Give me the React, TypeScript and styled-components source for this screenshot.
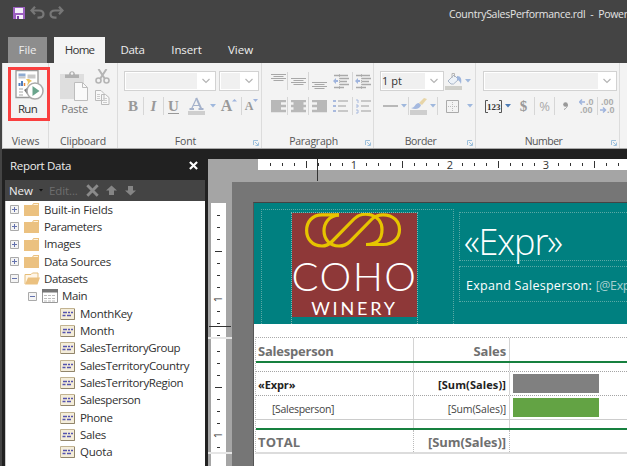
import React from 'react';
import styled, { createGlobalStyle } from 'styled-components';

const Global = createGlobalStyle`
  * { box-sizing: border-box; }
  html, body { margin: 0; width: 627px; height: 466px; overflow: hidden; background: #444; }
  body { font-family: "Open Sans", "Noto Sans", sans-serif; font-size: 12px; color: #333; }
  svg { display: block; flex: none; }
`;

const Text = styled.span<{ $size?: number; $ls?: number; $color?: string; $weight?: number; $font?: string }>`
  font-size: ${p => p.$size ?? 11.5}px;
  letter-spacing: ${p => p.$ls ?? -0.25}px;
  color: ${p => p.$color ?? 'inherit'};
  font-weight: ${p => p.$weight ?? 400};
  font-family: ${p => p.$font ?? 'inherit'};
  white-space: pre;
`;

const Window = styled.div`
  width: 627px;
  height: 466px;
  display: flex;
  flex-direction: column;
  background: #444;
  overflow: hidden;
`;

/* Title bar and tabs */
const TitleBar = styled.header`
  height: 37px;
  flex: none;
  display: flex;
  padding: 6px 0 0 13px;
  color: #e4e4e4;
`;
const QuickAccess = styled.div`
  width: 436px;
  flex: none;
  display: flex;
  gap: 4px;
`;
const Title = styled.div`
  line-height: 16px;
  white-space: pre;
`;
const Tabs = styled.nav`
  height: 26px;
  flex: none;
  display: flex;
  padding-left: 8px;
`;
const Tab = styled.div<{ $w: number; $kind?: 'file' | 'active' }>`
  width: ${p => p.$w}px;
  height: 26px;
  line-height: 26px;
  text-align: center;
  color: ${p => (p.$kind === 'active' ? '#333' : '#eee')};
  background: ${p => (p.$kind === 'active' ? '#f4f4f4' : p.$kind === 'file' ? '#8d8d8d' : 'transparent')};
  margin-right: ${p => (p.$kind === 'file' ? 7 : 0)}px;
`;

/* Ribbon */
const Ribbon = styled.div`
  height: 86px;
  flex: none;
  margin-left: 2px;
  display: flex;
  background: #f3f3f3;
  border-bottom: 1px solid #a9a9a9;
  border-left: 1px solid #ddd;
`;
const Group = styled.section<{ $w: number }>`
  width: ${p => p.$w}px;
  flex: none;
  position: relative;
  display: flex;
  flex-direction: column;
  border-right: 1px solid #dcdcdc;
`;
const ToolRow = styled.div<{ $pad: number; $mt: number }>`
  height: 20px;
  margin-top: ${p => p.$mt}px;
  padding-left: ${p => p.$pad}px;
  display: flex;
  align-items: center;
`;
const Slot = styled.div<{ $w: number }>`
  width: ${p => p.$w}px;
  height: 20px;
  flex: none;
  display: flex;
  align-items: center;
  justify-content: center;
`;
const Sep = styled.i`
  width: 1px;
  height: 18px;
  flex: none;
  background: #d6d6d6;
`;
const Combo = styled.div<{ $w: number; $mr?: number }>`
  width: ${p => p.$w}px;
  margin-right: ${p => p.$mr ?? 0}px;
  height: 20px;
  flex: none;
  display: flex;
  align-items: center;
  background: #fff;
  border: 1px solid #d2d2d2;
`;
const ComboValue = styled.div`
  flex: 1;
  height: 16px;
  margin-left: 1px;
  line-height: 15px;
  background: #f0f0f0;
`;
const GroupLabel = styled.div`
  margin-top: auto;
  height: 15px;
  line-height: 15px;
  display: flex;
  color: #555;
`;
const LabelText = styled.div`
  flex: 1;
  text-align: center;
`;
const Launcher = styled.div`
  width: 8px;
  padding-top: 7px;
`;
const Big = styled.div`
  display: flex;
  flex-direction: column;
  align-items: center;
  gap: 1px;
  line-height: 14px;
`;
const RunBody = styled(Big)`
  padding: 6px 0 0 3px;
  width: 46px;
  gap: 2px;
`;
const Highlight = styled.div`
  position: absolute;
  left: 5px;
  top: 4px;
  width: 42px;
  height: 54px;
  border: 3px solid #fa3f3f;
  z-index: 2;
`;
const ClipBody = styled.div`
  display: flex;
  padding: 6px 0 0 11px;
  gap: 6px;
`;
const ClipSmall = styled.div`
  display: flex;
  flex-direction: column;
  gap: 6px;
`;
const Glyph = styled.span<{ $size?: number; $italic?: boolean; $under?: boolean }>`
  font: ${p => (p.$italic ? 'italic ' : '')}bold ${p => p.$size ?? 15}px/16px "Liberation Serif", serif;
  color: #999;
  border-bottom: ${p => (p.$under ? '1px solid #999' : 'none')};
  height: ${p => (p.$under ? 16 : 17)}px;
`;

/* Work area */
const Work = styled.div`
  flex: 1;
  display: flex;
  min-height: 0;
  background: #212121;
  border-left: 2px solid #444;
`;
const Panel = styled.aside`
  width: 203px;
  flex: none;
  margin: 1px 0 0 3px;
  padding-right: 3px;
  display: flex;
  flex-direction: column;
`;
const PanelHead = styled.div`
  height: 30px;
  flex: none;
  padding: 1px 7px 0 5px;
  display: flex;
  align-items: center;
  justify-content: space-between;
  color: #eee;
`;
const PanelTools = styled.div`
  height: 21px;
  flex: none;
  padding-left: 4px;
  display: flex;
  align-items: center;
  background: #444;
  color: #eee;
`;
const Tool = styled.div<{ $w: number }>`
  width: ${p => p.$w}px;
  display: flex;
`;
const Tree = styled.div`
  flex: 1;
  background: #fff;
  line-height: 16px;
  color: #303030;
  border-left: 1px solid #ccc;
`;
const Node = styled.div<{ $pad: number }>`
  height: 17.33px;
  padding-left: ${p => p.$pad}px;
  display: flex;
  align-items: center;
`;
const Expander = styled.div`
  width: 14px;
`;
const NodeIcon = styled.div`
  width: 20px;
`;

/* Designer */
const Designer = styled.main`
  flex: 1;
  min-width: 0;
  margin-top: 10px;
  display: grid;
  grid-template-columns: 24px 1fr;
  grid-template-rows: 23px 1fr;
  background: #a5a5a5;
`;
const TopRuler = styled.div`
  grid-column: 2;
  position: relative;
  padding-left: 26px;
  overflow: hidden;
`;
const TopStrip = styled.div`
  width: 400px;
  height: 11px;
  background: #fff;
  padding-left: 6px;
  display: flex;
`;
const SideRuler = styled.div`
  grid-row: 2;
  grid-column: 1;
  position: relative;
  padding-top: 21px;
  overflow: hidden;
`;
const SideStrip = styled.div<{ $h: number }>`
  height: ${p => p.$h}px;
  width: 24px;
  border-bottom: 2px solid #e6e6e6;
`;
const SideInner = styled.div`
  width: 15px;
  height: 100%;
  margin-left: 3px;
  padding-top: 6px;
  background: #fff;
`;
const Cell = styled.div<{ $side?: boolean }>`
  width: ${p => (p.$side ? 15 : 12)}px;
  height: ${p => (p.$side ? 12 : 11)}px;
  flex: none;
  display: flex;
  align-items: center;
  justify-content: center;
`;
const Tick = styled.i<{ $w: number; $h: number }>`
  width: ${p => p.$w}px;
  height: ${p => p.$h}px;
  background: #333;
`;
const Num = styled.span<{ $side?: boolean }>`
  font-size: 11px;
  line-height: 10px;
  color: #333;
  transform: ${p => (p.$side ? 'rotate(-90deg)' : 'none')};
`;
const MarkX = styled.i`
  position: absolute;
  left: 85px;
  top: 0;
  width: 1px;
  height: 22px;
  background: #333;
`;
const MarkY = styled.i`
  position: absolute;
  left: 1px;
  top: 144px;
  width: 22px;
  height: 1px;
  background: #333;
`;
const Canvas = styled.div`
  background: #767676;
  padding: 20px 0 0 21px;
  overflow: hidden;
`;
const Report = styled.div`
  width: 500px;
  height: 300px;
  background: #fff;
  border-top: 1px solid #444;
  border-left: 1px solid #555;
`;
const Banner = styled.div`
  height: 121px;
  display: flex;
  padding: 6px 0 0 7px;
  background: #008080;
`;
const LogoArea = styled.div`
  width: 193px;
  height: 115px;
  flex: none;
  padding: 2px 0 0 29px;
  border: 1px dotted #5aa9a5;
  border-bottom: 0;
`;
const LogoCell = styled.div`
  width: 127px;
  height: 112px;
  border: 1px dotted #7fb4ae;
  border-bottom: 0;
`;
const Logo = styled.div`
  height: 104px;
  background: #8e3838;
  color: #fff;
  display: flex;
  flex-direction: column;
  align-items: center;
`;
const Brand = styled.div`
  height: 47px;
  flex: none;
  line-height: 47px;
  margin-top: 4px;
`;
const Sub = styled.div`
  height: 20px;
  flex: none;
  line-height: 20px;
  margin-top: -2px;
`;
const Titles = styled.div`
  margin: 3px 0 0 5px;
  width: 240px;
  flex: none;
  display: flex;
  flex-direction: column;
  gap: 5px;
  color: #fff;
`;
const TextBox = styled.div<{ $h: number }>`
  height: ${p => p.$h}px;
  padding-left: ${p => (p.$h > 40 ? 4 : 6)}px;
  line-height: ${p => (p.$h > 40 ? 58 : 38)}px;
  border: 1px dotted #5aa9a5;
  white-space: nowrap;
`;
const Table = styled.div`
  margin: 13px 0 0 1px;
  border-top: 1px dotted #aaa;
  border-left: 1px dotted #bbb;
  border-bottom: 2px solid #dcdcdc;
`;
const TRow = styled.div<{ $h: number; $line?: 'green' | 'dots' | 'solid' }>`
  height: ${p => p.$h}px;
  display: flex;
  border-bottom: ${p =>
    p.$line === 'green' ? '2px solid #16803f' : p.$line === 'dots' ? '1px dotted #a4a4a4' : p.$line === 'solid' ? '1px solid #ccc' : 'none'};
`;
const TCell = styled.div<{ $w: number; $right?: boolean; $pad?: number; $dots?: boolean }>`
  width: ${p => p.$w}px;
  flex: none;
  display: flex;
  align-items: center;
  justify-content: ${p => (p.$right ? 'flex-end' : 'flex-start')};
  padding-left: ${p => p.$pad ?? 2}px;
  padding-right: ${p => (p.$right ? 3 : 0)}px;
  padding-top: 2px;
  border-right: 1px ${p => (p.$dots ? 'dotted #bbb' : 'solid #d4d4d4')};
`;
const Bar = styled.div<{ $c: string }>`
  width: 86px;
  height: 19px;
  margin: 2px 0 0 3px;
  background: ${p => p.$c};
`;

const Caret = ({ c = '#9fb8dd' }: { c?: string }) => (
  <svg width="6" height="4"><path d="M0 0h6L3 3.5z" fill={c} /></svg>
);
const Chevron = () => (
  <svg width="18" height="8" viewBox="0 0 18 8"><path d="M5.5 2l3.5 3.5L12.500 2" fill="none" stroke="#b5b5b5" strokeWidth="1.2" /></svg>
);
const LauncherIcon = () => (
  <svg width="6" height="6"><path d="M.5 5V.5H5M2 2l3 3M5.500 2.500v3h-3" fill="none" stroke="#9dc0dc" /></svg>
);
const Label = ({ children, ls = -0.25, launch }: { children: string; ls?: number; launch?: boolean }) => (
  <GroupLabel>
    <LabelText><Text $size={10.5} $ls={ls}>{children}</Text></LabelText>
    {launch && <Launcher><LauncherIcon /></Launcher>}
  </GroupLabel>
);

const SaveIcon = () => (
  <svg width="13" height="13"><path d="M0 1h12v12H0z" fill="#9b5fc0" /><path d="M2 2h8v5H2zM3 9h7v4H3z" fill="#f5effa" /><path d="M4 10h2v3H4z" fill="#7a3ba5" /></svg>
);
const UndoIcon = ({ flip }: { flip?: boolean }) => (
  <svg width="15" height="13" viewBox="0 0 15 13">
    <g fill="none" stroke="#777" strokeWidth="2.200" transform={flip ? 'translate(15 0) scale(-1 1)' : undefined}>
      <path d="M5 .8L1.500 4.500 5 8.200M2 4.500h7c6 0 6 7.200 0 7.200H7.500" />
    </g>
  </svg>
);
const RunIcon = () => (
  <svg width="33" height="31" viewBox="-3 0 33 31">
    <path d="M2 1.500h22v27H2z" fill="#fff" stroke="#999" strokeWidth="1.3" />
    <path d="M4.500 4.500h7v3h-7z" fill="#8eabd2" /><path d="M4.500 8.500h7M13.500 6.500h8M13.500 8.500h8" stroke="#c9c9c9" strokeWidth="2" />
    <path d="M5.500 17v-3M8 17v-5" stroke="#527fbd" strokeWidth="2" /><path d="M10.500 17v-3" stroke="#e8893c" strokeWidth="1.500" />
    <path d="M12 10l2 3-1 4 3-4 2-1-3-2z" fill="#edc35d" /><path d="M5 20h4M5 23h4M5 26h4" stroke="#c5c5c5" strokeWidth="1.500" />
    <path d="M10 21l3-2v6z" fill="#777" />
    <circle cx="21" cy="22" r="8" fill="#fff" stroke="#aaa" strokeWidth="1.500" /><path d="M18.500 17l7 5-7 5z" fill="#6aa58d" />
  </svg>
);
const PasteIcon = () => (
  <svg width="29" height="32" viewBox="0 0 29 32">
    <path d="M0 5h24v25H0z" fill="#dedede" /><path d="M5 9V5.500h4C9 1 15 1 15 5.500h4V9z" fill="#b0b0b0" /><circle cx="12" cy="4.500" r="1.300" fill="#f3f3f3" />
    <path d="M14.500 13.500h8l5 5v13h-13z" fill="#fafafa" stroke="#bdbdbd" /><path d="M22.500 13.500v5h5" fill="none" stroke="#bdbdbd" />
  </svg>
);
const CutIcon = () => (
  <svg width="15" height="15" viewBox="0 0 15 15"><path d="M3.500 0l6.500 10M11.500 0L5 10" stroke="#b5b5b5" strokeWidth="2" /><circle cx="3.500" cy="11.500" r="2.500" fill="none" stroke="#b5b5b5" strokeWidth="1.600" /><circle cx="11.500" cy="11.500" r="2.500" fill="none" stroke="#b5b5b5" strokeWidth="1.600" /></svg>
);
const CopyIcon = () => (
  <svg width="15" height="15" viewBox="0 0 15 15"><path d="M.5.5H6l3 3v7H.5zM6.500 4.500h4l3.500 3v7H6.500z" fill="#f8f8f8" stroke="#bababa" /><path d="M2 4.500h3M2 6.500h3M2 8.500h3M8 8.500h4M8 10.500h4M8 12.500h4" stroke="#ccc" /></svg>
);
const FontColorIcon = () => (
  <svg width="17" height="18"><path d="M0 14h17v4H0z" fill="#cecece" /><path d="M3.500 12L8.500 1.200M5 8.500h7" fill="none" stroke="#a5b2cb" strokeWidth="1.200" /><path d="M8.300.8L13.300 12M1.500 12h4.500M10.500 12h5" fill="none" stroke="#a5b2cb" strokeWidth="1.900" /></svg>
);
const VAlign = ({ y }: { y: number }) => (
  <svg width="15" height="17"><path d={`M0 ${y + .5}h15M2.500 ${y + 2.5}h10M0 ${y + 4.5}h15M2.500 ${y + 6.5}h10`} stroke="#a8a8a8" strokeWidth="1.200" /></svg>
);
const Indent = () => (
  <svg width="16" height="15" viewBox="0 0 16 15"><path d="M1 1.500h14M6.500 4.500H16M6.500 7.500H14M6.500 10.500H16M1 13.500h10" stroke="#aaa" strokeWidth="1.600" /><path d="M6.500 0v15" stroke="#b8b8b8" strokeDasharray="1 1" /><path d="M0 7l3-3v2h2v2H3v2z" fill="#9fb4dd" /></svg>
);
const HAlign = ({ kind }: { kind: 0 | 1 | 2 }) => (
  <svg width="15" height="13"><path d={['M0 1h15M0 3.500h10M0 6h15M0 8.500h10M0 11h15', 'M0 1h15M2.500 3.500h10M0 6h15M2.500 8.500h10M0 11h15', 'M0 1h15M5 3.500h10M0 6h15M5 8.500h10M0 11h15'][kind]} stroke="#b8b8b8" strokeWidth="2.300" /></svg>
);
const ListIcon = ({ num }: { num?: boolean }) => (
  <svg width="15" height="15"><path d="M5 2h10M5 7h8M5 12h10" stroke="#bbb" strokeWidth="1.500" />{num ? <path d="M0 1h2v3M0 6h2v2H0M0 11h2v3H0" fill="none" stroke="#a9bade" /> : <path d="M0 1h3v2H0zM0 6h3v2H0zM0 11h3v2H0z" fill="#a9bade" />}</svg>
);
const BucketIcon = () => (
  <svg width="17" height="18"><path d="M0 14h17v4H0z" fill="#cfcfca" /><path d="M3 9l6-6 4.500 4.500-5 4.500H6z" fill="#edf2f8" stroke="#a9b6c8" /><path d="M7 6V1.500h2.500V5" fill="none" stroke="#b5b5b5" /><path d="M12 4c4 0 5 3 4 8-1-2-2-4-4-4z" fill="#9eb5dc" /></svg>
);
const PenIcon = () => (
  <svg width="17" height="18"><path d="M0 13h17v5H0z" fill="#cecece" /><path d="M1 11c4 0 4-5 8-5l2 2c-1 4-6 5-10 3z" fill="#a5b9df" /><path d="M9 6l5-5 3 1-5 6z" fill="#e7d5a8" /></svg>
);
const BorderIcon = () => (
  <svg width="13" height="13"><path d="M.5.5h12v12H.5z" fill="none" stroke="#aaa" /><path d="M6.500 2v10M2 6.500h10" stroke="#bbb" strokeDasharray="1 1" /></svg>
);
const Decimals = ({ less }: { less?: boolean }) => (
  <svg width="16" height="16" fontFamily="Liberation Sans" fontSize="9" fontWeight="700" fill="#acacac">
    <text x={less ? 1 : 7} y="7">{less ? '.00' : '.0'}</text><text x={less ? 7 : 1} y="15">{less ? '.0' : '.00'}</text>
    <path d={less ? 'M0 12h5M3 9.500L5.500 12 3 14.500' : 'M6 4H1M3 1.500L.5 4 3 6.500'} fill="none" stroke="#9fb4dd" strokeWidth="1.500" />
  </svg>
);
const NumberFormat = () => (
  <svg width="17" height="13"><path d="M3 .5H.5v12H3M14 .5h2.500v12H14" fill="none" stroke="#555" /><text x="2" y="10" fontFamily="Liberation Serif" fontWeight="700" fontSize="9" fill="#333">123</text></svg>
);

const Box = ({ open }: { open?: boolean }) => (
  <svg width="9" height="9"><path d="M.5.5h8v8h-8z" fill="#f4f4f4" stroke="#aaa" /><path d={open ? 'M2 4.500h5' : 'M2 4.500h5M4.500 2v5'} stroke="#6472ae" /></svg>
);
const Folder = ({ open }: { open?: boolean }) => (
  <svg width="16" height="13">{open
    ? <><path d="M1 12V2.500h6L8.500 1H14v5" fill="#fff6e8" stroke="#e5bd78" /><path d="M1 12.500L4 5.500h12L13.500 12.500z" fill="#ebc180" /></>
    : <><path d="M0 2h8l1.500-2H15v13H0z" fill="#ebc180" /><path d="M9.500 1.500H14" stroke="#fff3dc" /></>}</svg>
);
const TableIcon = () => (
  <svg width="16" height="14"><path d="M.5.5h15v13H.5z" fill="#fff" stroke="#999" /><path d="M0 0h16v3.500H0z" fill="#777" /><path d="M2 6.500h12M2 9.500h12M2 12h12" stroke="#bbb" strokeDasharray="3 1" /></svg>
);
const FieldIcon = () => (
  <svg width="16" height="12"><path d="M.5.5h14v11H.5z" fill="#f4edda" stroke="#c2b391" /><path d="M14.500 1v10.500H1" fill="none" stroke="#91856b" /><path d="M3 4.500h4M8 4.500h2M11 4.500h2M2.500 7.500h3M7 7.500h4" stroke="#5554ae" strokeWidth="1.500" /></svg>
);
const Cross = ({ s, c, w }: { s: number; c: string; w: number }) => (
  <svg width={s} height={s} viewBox="0 0 10 10"><path d="M1 1l8 8M9 1L1 9" stroke={c} strokeWidth={w} /></svg>
);
const Arrow = ({ down }: { down?: boolean }) => (
  <svg width="11" height="11"><path d={down ? 'M5.500 10.500L0 5.500h3V1h5v4.500h3z' : 'M5.500.5L11 5.500H8V10H3V5.500H0z'} fill="#858585" /></svg>
);
const Swirl = () => (
  <svg width="125" height="36" viewBox="0 0 125 36">
    <g fill="none" stroke="#e6c400" strokeWidth="3.200">
      <path d="M47 1.800H30C9.500 1.800 9.500 33 30 33C34 33 37 31.500 40 28.500L62 6C71-3 90 1 90 16.500C90 27 85 31.500 74 31.500" />
      <path d="M47 1.800C27 3 27 33 47 33C52 33 55 31.500 58 28.500L80 6C83 3 86 1.800 91 1.800C113 1.800 113 31.500 91 31.500H74" />
    </g>
  </svg>
);

const ticks = (n: number, side = false) =>
  Array.from({ length: n }, (_, i) => {
    const k = i + 1;
    const long = k % 8 === 4;
    return (
      <Cell key={k} $side={side}>
        {k % 8 === 0 ? <Num $side={side}>{k / 8}</Num>
          : side ? <Tick $w={long ? 7 : 3} $h={1} /> : <Tick $w={1} $h={long ? 7 : 3} />}
      </Cell>
    );
  });

const folders: [string, number][] = [['Built-in Fields', -0.2], ['Parameters', -0.45], ['Images', -0.35], ['Data Sources', -0.32]];
const fields: [string, number][] = [
  ['MonthKey', -0.3], ['Month', -0.25], ['SalesTerritoryGroup', -0.42], ['SalesTerritoryCountry', -0.37],
  ['SalesTerritoryRegion', -0.38], ['Salesperson', -0.44], ['Phone', -0.35], ['Sales', -0.3], ['Quota', -0.2],
];

export default function App() {
  return (
    <Window>
      <Global />
      <TitleBar>
        <QuickAccess><SaveIcon /><UndoIcon /><UndoIcon flip /></QuickAccess>
        <Title><Text $size={10.5} $ls={-0.28}>CountrySalesPerformance.rdl</Text><Text $size={10.5} $ls={-0.3}>{'  -  Power'}</Text></Title>
      </TitleBar>
      <Tabs>
        <Tab $w={39} $kind="file"><Text $ls={-0.1}>File</Text></Tab>
        <Tab $w={51} $kind="active"><Text $ls={-0.7}>Home</Text></Tab>
        <Tab $w={55}><Text>Data</Text></Tab>
        <Tab $w={53}><Text $ls={-0.1}>Insert</Text></Tab>
        <Tab $w={55}><Text $ls={0}>View</Text></Tab>
      </Tabs>
      <Ribbon>
        <Group $w={46}>
          <RunBody><RunIcon /><Text $ls={-0.7}>Run</Text></RunBody>
          <Highlight />
          <Label ls={-0.05}>Views</Label>
        </Group>
        <Group $w={69}>
          <ClipBody>
            <Big><PasteIcon /><Text $size={11} $ls={-0.3} $color="#777">Paste</Text></Big>
            <ClipSmall><CutIcon /><CopyIcon /></ClipSmall>
          </ClipBody>
          <Label ls={-0.2}>Clipboard</Label>
        </Group>
        <Group $w={144}>
          <ToolRow $pad={6} $mt={8}>
            <Combo $w={92} $mr={3}><ComboValue /><Chevron /></Combo>
            <Combo $w={40}><ComboValue /><Chevron /></Combo>
          </ToolRow>
          <ToolRow $pad={5} $mt={5}>
            <Slot $w={20}><Glyph>B</Glyph></Slot><Sep />
            <Slot $w={19}><Glyph $italic>I</Glyph></Slot><Sep />
            <Slot $w={19}><Glyph $under>U</Glyph></Slot>
            <Slot $w={1} />
            <Slot $w={24}><FontColorIcon /></Slot><Slot $w={9}><Caret /></Slot>
            <Slot $w={24}><Glyph $size={16}>A</Glyph><Slot $w={5}><svg width="5" height="16"><path d="M0 3.500L2.500 1 5 3.500z" fill="#9fb4dd" /></svg></Slot></Slot><Sep />
            <Slot $w={19}><Glyph $size={12}>A</Glyph><Slot $w={5}><svg width="5" height="16"><path d="M0 1h5L2.500 4z" fill="#9fb4dd" /></svg></Slot></Slot>
          </ToolRow>
          <Label ls={-0.1} launch>Font</Label>
        </Group>
        <Group $w={112}>
          <ToolRow $pad={7} $mt={8}>
            <Slot $w={18}><VAlign y={1} /></Slot><Sep /><Slot $w={20}><VAlign y={5} /></Slot><Sep />
            <Slot $w={20}><VAlign y={9} /></Slot><Slot $w={23}><Indent /></Slot><Sep /><Slot $w={20}><Indent /></Slot>
          </ToolRow>
          <ToolRow $pad={7} $mt={5}>
            <Slot $w={18}><HAlign kind={0} /></Slot><Sep /><Slot $w={20}><HAlign kind={1} /></Slot><Sep />
            <Slot $w={20}><HAlign kind={2} /></Slot><Slot $w={23}><ListIcon /></Slot><Sep /><Slot $w={20}><ListIcon num /></Slot>
          </ToolRow>
          <Label ls={-0.25} launch>Paragraph</Label>
        </Group>
        <Group $w={102}>
          <ToolRow $pad={6} $mt={8}>
            <Combo $w={64} $mr={1}><ComboValue><Text $size={11} $ls={0}>1 pt</Text></ComboValue><Chevron /></Combo>
            <BucketIcon /><Slot $w={11}><Caret /></Slot>
          </ToolRow>
          <ToolRow $pad={6} $mt={5}>
            <Slot $w={20}><svg width="15" height="2"><path d="M0 1h15" stroke="#b8b8b8" strokeWidth="2" /></svg></Slot>
            <Slot $w={8}><Caret /></Slot><Sep /><Slot $w={19}><PenIcon /></Slot><Slot $w={9}><Caret /></Slot><Sep />
            <Slot $w={29}><BorderIcon /></Slot><Slot $w={6}><Caret /></Slot>
          </ToolRow>
          <Label ls={-0.4} launch>Border</Label>
        </Group>
        <Group $w={144}>
          <ToolRow $pad={7} $mt={8}><Combo $w={134}><ComboValue /><Chevron /></Combo></ToolRow>
          <ToolRow $pad={8} $mt={5}>
            <Slot $w={18}><NumberFormat /></Slot><Slot $w={11}><Caret c="#4d7cb5" /></Slot>
            <Slot $w={21}><Glyph>$</Glyph></Slot><Sep />
            <Slot $w={19}><Text $size={13} $color="#aaa">%</Text></Slot><Sep />
            <Slot $w={21}><svg width="5" height="8"><circle cx="2.500" cy="2.500" r="2.300" fill="#999" /><path d="M4.500 2.500C4.500 5 3 6.500 1 7.500" fill="none" stroke="#999" /></svg></Slot>
            <Slot $w={21}><Decimals /></Slot><Sep /><Slot $w={20}><Decimals less /></Slot>
          </ToolRow>
          <Label ls={-0.5} launch>Number</Label>
        </Group>
      </Ribbon>
      <Work>
        <Panel>
          <PanelHead><Text $ls={-0.32}>Report Data</Text><Cross s={9} c="#fff" w={2.4} /></PanelHead>
          <PanelTools>
            <Tool $w={30}><Text $ls={-0.1}>New</Text></Tool>
            <Tool $w={10}><svg width="4" height="3"><path d="M0 0h4L2 2.500z" fill="#111" /></svg></Tool>
            <Tool $w={37}><Text $ls={-0.1} $color="#6e6e6e">Edit...</Text></Tool>
            <Tool $w={20}><Cross s={13} c="#8a8a8a" w={2.2} /></Tool>
            <Tool $w={19}><Arrow /></Tool><Arrow down />
          </PanelTools>
          <Tree>
            {folders.map(([t, ls]) => (
              <Node key={t} $pad={4}><Expander><Box /></Expander><NodeIcon><Folder /></NodeIcon><Text $ls={ls}>{t}</Text></Node>
            ))}
            <Node $pad={4}><Expander><Box open /></Expander><NodeIcon><Folder open /></NodeIcon><Text $ls={-0.4}>Datasets</Text></Node>
            <Node $pad={22}><Expander><Box open /></Expander><NodeIcon><TableIcon /></NodeIcon><Text $ls={-0.35}>Main</Text></Node>
            {fields.map(([t, ls]) => (
              <Node key={t} $pad={54}><NodeIcon><FieldIcon /></NodeIcon><Text $ls={ls}>{t}</Text></Node>
            ))}
          </Tree>
        </Panel>
        <Designer>
          <TopRuler><TopStrip>{ticks(30)}</TopStrip><MarkX /></TopRuler>
          <SideRuler>
            <SideStrip $h={136}><SideInner>{ticks(11, true)}</SideInner></SideStrip>
            <SideStrip $h={115}><SideInner>{ticks(9, true)}</SideInner></SideStrip>
            <SideStrip $h={40}><SideInner>{ticks(1, true)}</SideInner></SideStrip>
            <MarkY />
          </SideRuler>
          <Canvas>
            <Report>
              <Banner>
                <LogoArea>
                  <LogoCell>
                    <Logo>
                      <Swirl />
                      <Brand><Text $size={40} $ls={1.5} $weight={300} $font='Lato, sans-serif'>COHO</Text></Brand>
                      <Sub><Text $size={18} $ls={2.8} $font='Lato, sans-serif'>WINERY</Text></Sub>
                    </Logo>
                  </LogoCell>
                </LogoArea>
                <Titles>
                  <TextBox $h={49}><Text $size={36} $ls={-1.1} $weight={300}>«Expr»</Text></TextBox>
                  <TextBox $h={36}><Text $size={12.5} $ls={0.28}>Expand Salesperson: </Text><Text $size={12.5} $ls={-0.4} $color="#a5cfcf">[@Exp</Text></TextBox>
                </Titles>
              </Banner>
              <Table>
                <TRow $h={25} $line="green">
                  <TCell $w={158}><Text $size={13} $ls={-0.22} $weight={700} $color="#707070">Salesperson</Text></TCell>
                  <TCell $w={96} $right><Text $size={13} $ls={-0.1} $weight={700} $color="#707070">Sales</Text></TCell>
                </TRow>
                <TRow $h={9} $line="dots"><TCell $w={158} /><TCell $w={96} /></TRow>
                <TRow $h={24} $line="dots">
                  <TCell $w={158}><Text $size={11} $ls={-0.1} $weight={700} $color="#222">«Expr»</Text></TCell>
                  <TCell $w={96} $right><Text $size={11} $ls={0.1} $weight={700} $color="#222">[Sum(Sales)]</Text></TCell>
                  <Bar $c="#808080" />
                </TRow>
                <TRow $h={24} $line="solid">
                  <TCell $w={158} $pad={16}><Text $size={10.5} $ls={-0.32} $color="#444">[Salesperson]</Text></TCell>
                  <TCell $w={96} $right><Text $size={10.5} $ls={-0.15} $color="#444">[Sum(Sales)]</Text></TCell>
                  <Bar $c="#63a344" />
                </TRow>
                <TRow $h={10} $line="green"><TCell $w={158} /><TCell $w={96} /></TRow>
                <TRow $h={22}>
                  <TCell $w={158} $dots><Text $size={13} $ls={0.1} $weight={700} $color="#707070">TOTAL</Text></TCell>
                  <TCell $w={96} $right $dots><Text $size={13} $ls={-0.08} $weight={700} $color="#707070">[Sum(Sales)]</Text></TCell>
                </TRow>
              </Table>
            </Report>
          </Canvas>
        </Designer>
      </Work>
    </Window>
  );
}
